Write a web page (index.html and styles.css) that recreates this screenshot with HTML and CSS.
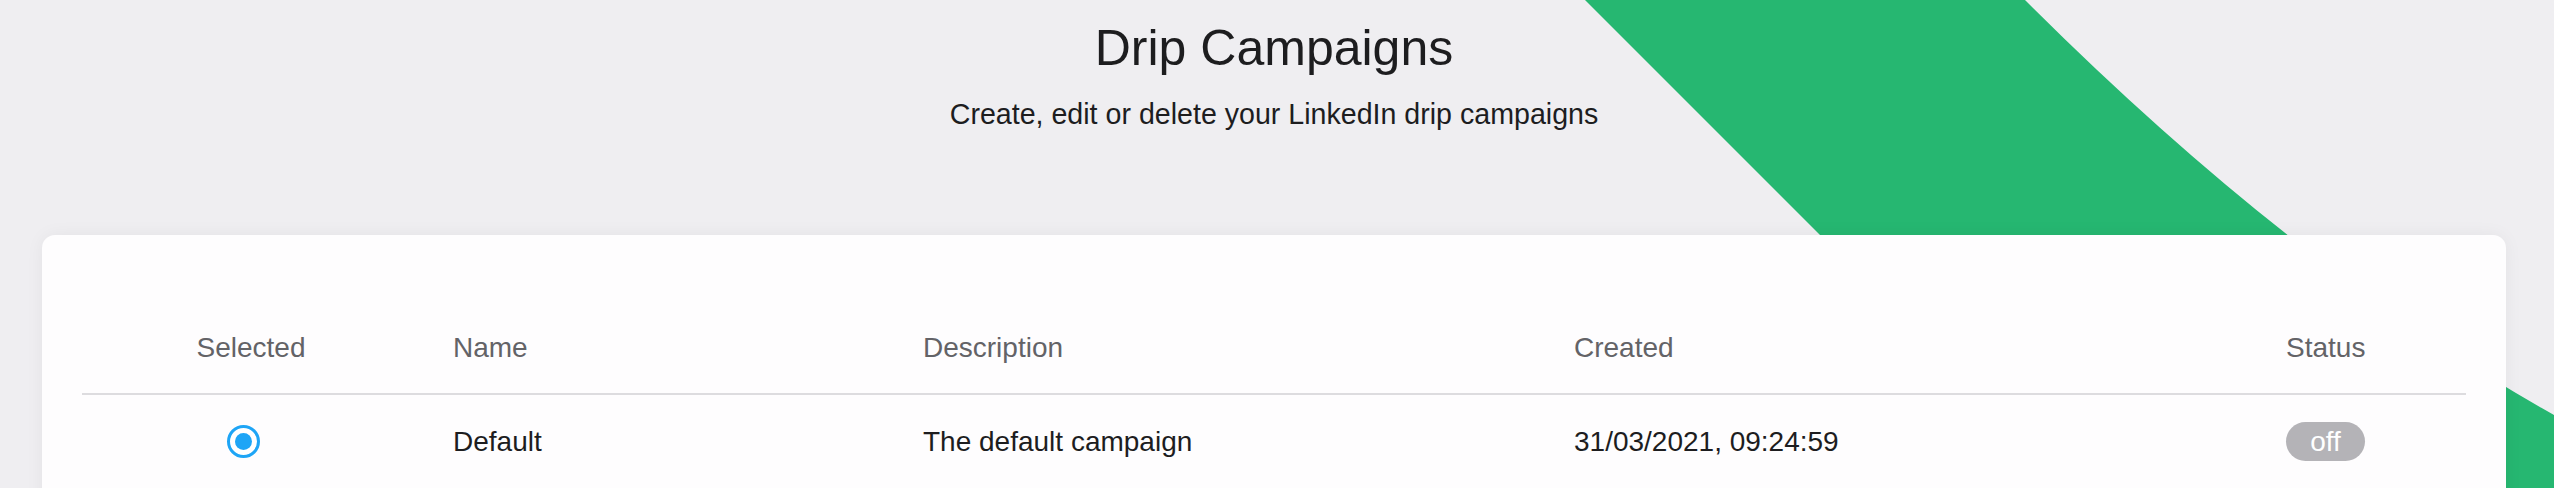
FILE: index.html
```html
<!DOCTYPE html>
<html lang="en">
<head>
<meta charset="utf-8">
<title>Drip Campaigns</title>
<link rel="stylesheet" href="styles.css">
</head>
<body>
  <svg class="bg-shape" width="2554" height="488" viewBox="0 0 2554 488" aria-hidden="true">
    <path d="M1585 0 L2025 0 Q2294 269 2554 415 L2554 488 L2073 488 Z" fill="#26b771"/>
  </svg>
  <main class="page">
    <header class="intro">
      <h1 class="intro-title">Drip Campaigns</h1>
      <p class="intro-sub">Create, edit or delete your LinkedIn drip campaigns</p>
    </header>
    <section class="card">
      <div class="row row-head">
        <div class="cell cell-sel">Selected</div>
        <div class="cell">Name</div>
        <div class="cell">Description</div>
        <div class="cell">Created</div>
        <div class="cell">Status</div>
      </div>
      <div class="row row-body">
        <div class="cell cell-sel"><span class="radio"><span class="radio-dot"></span></span></div>
        <div class="cell">Default</div>
        <div class="cell">The default campaign</div>
        <div class="cell">31/03/2021, 09:24:59</div>
        <div class="cell"><span class="pill">off</span></div>
      </div>
    </section>
  </main>
</body>
</html>
```
FILE: styles.css
```css
html, body {
  margin: 0;
  padding: 0;
}
body {
  position: relative;
  min-height: 488px;
  overflow: hidden;
  background: #efeef1;
  font-family: "Liberation Sans", Arial, Helvetica, sans-serif;
  color: #1e1e20;
}
.bg-shape {
  position: absolute;
  top: 0;
  left: 0;
  z-index: 0;
  display: block;
}
.page {
  position: relative;
  z-index: 1;
  margin-left: 42px;
  width: 2464px;
}
.intro {
  text-align: center;
  padding-top: 19px;
}
.intro-title {
  margin: 0;
  font-size: 50px;
  line-height: 58px;
  font-weight: 400;
  color: #1d1d1f;
}
.intro-sub {
  margin: 21px 0 0;
  font-size: 28.6px;
  line-height: 32px;
  color: #1d1d1f;
}
.card {
  margin-top: 105px;
  background: #fefdfe;
  border-radius: 13px;
  padding: 0 40px 60px;
  box-shadow: 0 0 18px rgba(0, 0, 0, 0.05);
}
.row {
  display: grid;
  grid-template-columns: 371px 470px 651px 712px 79px;
  font-size: 28px;
  line-height: 32px;
}
.row-head {
  padding: 97px 0 29px;
  color: #636367;
  border-bottom: 2px solid #dddcdf;
}
.row-body {
  padding: 27px 0;
  align-items: center;
  color: #1d1d1f;
}
.cell {
  white-space: nowrap;
}
.cell-sel {
  padding-right: 33px;
  text-align: center;
  display: flex;
  justify-content: center;
}
.radio {
  box-sizing: border-box;
  width: 33px;
  height: 33px;
  margin-right: 16px;
  border: 3px solid #1ea5f6;
  border-radius: 50%;
  display: flex;
  align-items: center;
  justify-content: center;
  background: #fff;
}
.radio-dot {
  width: 17px;
  height: 17px;
  border-radius: 50%;
  background: #1ea5f6;
}
.pill {
  display: flex;
  align-items: center;
  justify-content: center;
  width: 79px;
  height: 39px;
  border-radius: 20px;
  background: #b4b3b7;
  color: #ffffff;
  font-size: 28px;
  line-height: 32px;
}
```
